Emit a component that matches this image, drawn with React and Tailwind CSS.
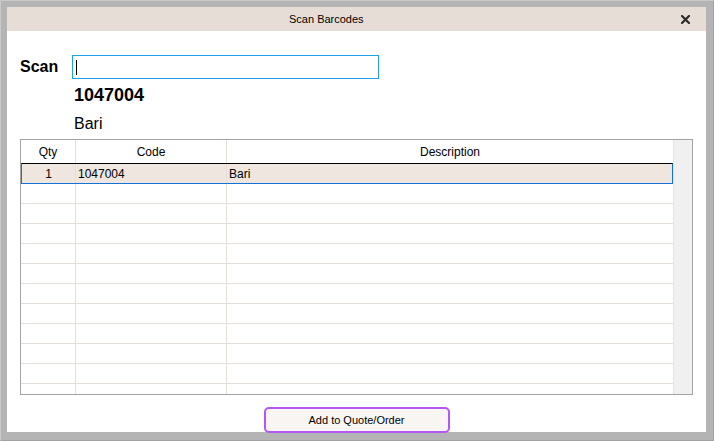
import React from "react";

const ui = { fontFamily: '"Liberation Sans", Arial, sans-serif' };

function EmptyRow() {
  return (
    <div className="flex h-[20px] shrink-0 border-b border-[#e6ded8]">
      <div className="w-[55px] border-r border-[#e6ded8]" />
      <div className="w-[151px] border-r border-[#e6ded8]" />
      <div className="flex-1" />
    </div>
  );
}

export default function App() {
  const rows = Array.from({ length: 11 });
  return (
    <div
      className="w-[714px] h-[441px] bg-[#b4b4b4] p-[7px] border-r border-b border-[#a2a2a2] border-t border-l border-t-[#c9c9c9] border-l-[#c9c9c9]"
      style={ui}
    >
      <div className="flex h-full flex-col bg-white -mt-[1px] -ml-[1px]">
        {/* Title bar */}
        <div className="relative flex h-[24px] shrink-0 items-center bg-[#e7ddd7] pl-[282px] text-[11px] text-black">
          <span>Scan Barcodes</span>
          <svg
            className="absolute right-[16px] top-[8px]"
            width="9"
            height="9"
            viewBox="0 0 9 9"
          >
            <path d="M1 1 L8 8 M8 1 L1 8" stroke="#2b2b2b" strokeWidth="2.2" strokeLinecap="square" />
          </svg>
        </div>

        {/* Scan row */}
        <div className="mt-[24px] flex items-center pl-[13px]">
          <div className="w-[52px] text-[16px] font-bold text-black">Scan</div>
          <div className="relative h-[24px] w-[307px] border border-[#1ea0e2] bg-white">
            <div className="absolute left-[3px] top-[4px] h-[15px] w-[1px] bg-black" />
          </div>
        </div>

        <div className="mt-[5px] pl-[67px] text-[18px] font-bold leading-[22px] text-black">1047004</div>
        <div className="mt-[8px] pl-[67px] text-[16px] leading-[20px] text-black">Bari</div>

        {/* Table */}
        <div className="ml-[13px] mt-[5px] flex h-[256px] w-[673px] shrink-0 overflow-hidden border border-[#a3a3a3] text-[12px] text-black">
          <div className="flex w-[652px] flex-col overflow-hidden">
            {/* header */}
            <div className="flex h-[23px] shrink-0 items-center">
              <div className="flex h-full w-[55px] items-center justify-center border-r border-[#e6ded8]">Qty</div>
              <div className="flex h-full w-[151px] items-center justify-center border-r border-[#e6ded8]">Code</div>
              <div className="flex h-full flex-1 items-center justify-center">Description</div>
            </div>
            {/* selected row */}
            <div className="flex h-[21px] shrink-0 border-t border-t-black border-l border-r border-b border-l-[#1572d4] border-r-[#1572d4] border-b-[#1572d4] bg-[#efe6e0]">
              <div className="flex w-[54px] items-center justify-center border-r border-[#e6ded8]">1</div>
              <div className="flex w-[151px] items-center border-r border-[#e6ded8] pl-[2px]">1047004</div>
              <div className="flex flex-1 items-center pl-[2px]">Bari</div>
            </div>
            {rows.map((_, i) => (
              <EmptyRow key={i} />
            ))}
          </div>
          <div className="w-[19px] border-l border-[#e4e4e4] bg-[#f0f0f0]" />
        </div>

        {/* Button */}
        <div className="mt-[12px] flex justify-center">
          <button className="flex h-[26px] w-[186px] items-center justify-center rounded-[5px] border-2 border-[#b257f3] bg-[#f9f5f3] text-[11px] text-black">
            Add to Quote/Order
          </button>
        </div>
      </div>
    </div>
  );
}
